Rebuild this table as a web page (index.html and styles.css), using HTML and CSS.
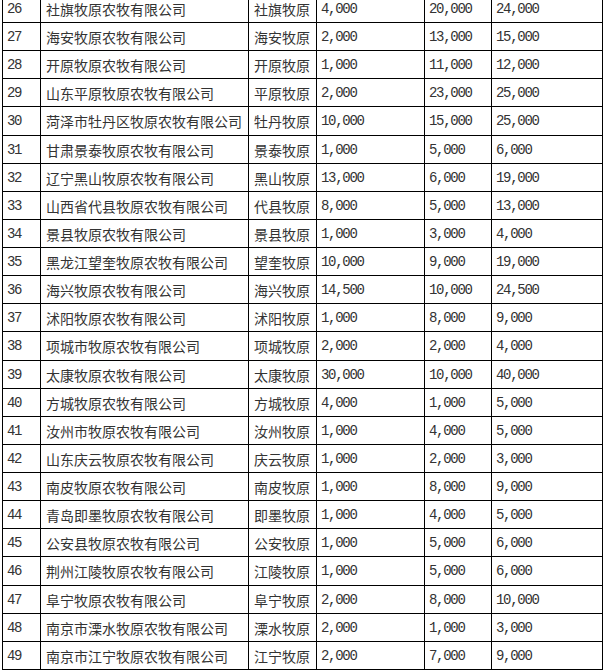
FILE: index.html
```html
<!DOCTYPE html>
<html lang="zh">
<head>
<meta charset="utf-8">
<title>牧原农牧子公司</title>
<link rel="stylesheet" href="styles.css">
</head>
<body>
<table class="farms">
<colgroup>
<col class="c-no"><col class="c-name"><col class="c-short"><col class="c-a"><col class="c-b"><col class="c-c">
</colgroup>
<tbody>
<tr><td class="num">26</td><td>社旗牧原农牧有限公司</td><td>社旗牧原</td><td class="num">4,000</td><td class="num">20,000</td><td class="num">24,000</td></tr>
<tr><td class="num">27</td><td>海安牧原农牧有限公司</td><td>海安牧原</td><td class="num">2,000</td><td class="num">13,000</td><td class="num">15,000</td></tr>
<tr><td class="num">28</td><td>开原牧原农牧有限公司</td><td>开原牧原</td><td class="num">1,000</td><td class="num">11,000</td><td class="num">12,000</td></tr>
<tr><td class="num">29</td><td>山东平原牧原农牧有限公司</td><td>平原牧原</td><td class="num">2,000</td><td class="num">23,000</td><td class="num">25,000</td></tr>
<tr class="tall"><td class="num">30</td><td>菏泽市牡丹区牧原农牧有限公司</td><td>牡丹牧原</td><td class="num">10,000</td><td class="num">15,000</td><td class="num">25,000</td></tr>
<tr><td class="num">31</td><td>甘肃景泰牧原农牧有限公司</td><td>景泰牧原</td><td class="num">1,000</td><td class="num">5,000</td><td class="num">6,000</td></tr>
<tr><td class="num">32</td><td>辽宁黑山牧原农牧有限公司</td><td>黑山牧原</td><td class="num">13,000</td><td class="num">6,000</td><td class="num">19,000</td></tr>
<tr><td class="num">33</td><td>山西省代县牧原农牧有限公司</td><td>代县牧原</td><td class="num">8,000</td><td class="num">5,000</td><td class="num">13,000</td></tr>
<tr><td class="num">34</td><td>景县牧原农牧有限公司</td><td>景县牧原</td><td class="num">1,000</td><td class="num">3,000</td><td class="num">4,000</td></tr>
<tr><td class="num">35</td><td>黑龙江望奎牧原农牧有限公司</td><td>望奎牧原</td><td class="num">10,000</td><td class="num">9,000</td><td class="num">19,000</td></tr>
<tr><td class="num">36</td><td>海兴牧原农牧有限公司</td><td>海兴牧原</td><td class="num">14,500</td><td class="num">10,000</td><td class="num">24,500</td></tr>
<tr><td class="num">37</td><td>沭阳牧原农牧有限公司</td><td>沭阳牧原</td><td class="num">1,000</td><td class="num">8,000</td><td class="num">9,000</td></tr>
<tr class="tall"><td class="num">38</td><td>项城市牧原农牧有限公司</td><td>项城牧原</td><td class="num">2,000</td><td class="num">2,000</td><td class="num">4,000</td></tr>
<tr><td class="num">39</td><td>太康牧原农牧有限公司</td><td>太康牧原</td><td class="num">30,000</td><td class="num">10,000</td><td class="num">40,000</td></tr>
<tr><td class="num">40</td><td>方城牧原农牧有限公司</td><td>方城牧原</td><td class="num">4,000</td><td class="num">1,000</td><td class="num">5,000</td></tr>
<tr><td class="num">41</td><td>汝州市牧原农牧有限公司</td><td>汝州牧原</td><td class="num">1,000</td><td class="num">4,000</td><td class="num">5,000</td></tr>
<tr><td class="num">42</td><td>山东庆云牧原农牧有限公司</td><td>庆云牧原</td><td class="num">1,000</td><td class="num">2,000</td><td class="num">3,000</td></tr>
<tr><td class="num">43</td><td>南皮牧原农牧有限公司</td><td>南皮牧原</td><td class="num">1,000</td><td class="num">8,000</td><td class="num">9,000</td></tr>
<tr><td class="num">44</td><td>青岛即墨牧原农牧有限公司</td><td>即墨牧原</td><td class="num">1,000</td><td class="num">4,000</td><td class="num">5,000</td></tr>
<tr><td class="num">45</td><td>公安县牧原农牧有限公司</td><td>公安牧原</td><td class="num">1,000</td><td class="num">5,000</td><td class="num">6,000</td></tr>
<tr class="tall"><td class="num">46</td><td>荆州江陵牧原农牧有限公司</td><td>江陵牧原</td><td class="num">1,000</td><td class="num">5,000</td><td class="num">6,000</td></tr>
<tr><td class="num">47</td><td>阜宁牧原农牧有限公司</td><td>阜宁牧原</td><td class="num">2,000</td><td class="num">8,000</td><td class="num">10,000</td></tr>
<tr><td class="num">48</td><td>南京市溧水牧原农牧有限公司</td><td>溧水牧原</td><td class="num">2,000</td><td class="num">1,000</td><td class="num">3,000</td></tr>
<tr><td class="num">49</td><td>南京市江宁牧原农牧有限公司</td><td>江宁牧原</td><td class="num">2,000</td><td class="num">7,000</td><td class="num">9,000</td></tr>
</tbody>
</table>
</body>
</html>
```
FILE: styles.css
```css
html, body {
  margin: 0;
  padding: 0;
  background: #fff;
}

.farms {
  border-collapse: collapse;
  table-layout: fixed;
  width: 600px;
  margin: -6px 0 0 2px;
  font-family: "Noto Sans CJK SC", sans-serif;
  font-size: 14px;
  color: #333;
}

.c-no { width: 38px; }
.c-name { width: 208px; }
.c-short { width: 68px; }
.c-a { width: 108px; }
.c-b { width: 67px; }
.c-c { width: 111px; }

.farms tr {
  height: 28px;
}

.farms tr.tall {
  height: 29px;
}

.farms td {
  border: 1px solid #000;
  padding: 0 0 0 5px;
  line-height: 16px;
  white-space: nowrap;
  overflow: hidden;
  vertical-align: middle;
}

.farms td.num {
  font-family: "Liberation Mono", monospace;
  letter-spacing: -1.3px;
  padding-left: 4px;
}
```
